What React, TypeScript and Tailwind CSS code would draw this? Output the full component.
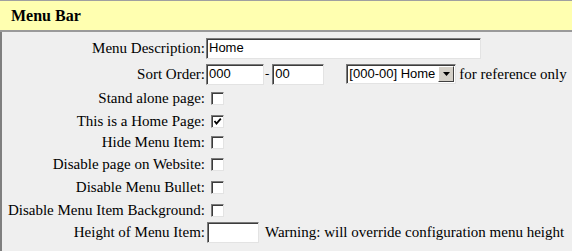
import React from 'react'

const inset =
  'bg-white border border-t-[#7b7b7b] border-l-[#7b7b7b] border-b-[#e3e3e3] border-r-[#e3e3e3] shadow-[inset_1px_1px_0_#3c3c3c]'

function TextBox({ value = '', className = '' }: { value?: string; className?: string }) {
  return (
    <div className={`${inset} h-[21px] flex items-center pl-[2px] [font-family:'Liberation_Sans',Arial,sans-serif] text-[13px] text-black ${className}`}>
      {value}
    </div>
  )
}

function Check({ checked = false }: { checked?: boolean }) {
  return (
    <div className={`${inset} w-[13px] h-[13px] ml-[5px] relative`}>
      {checked && (
        <svg viewBox="0 0 13 13" className="absolute inset-0 w-[13px] h-[13px] -translate-x-[1px] -translate-y-[1px]">
          <path d="M3.5 6 L5.5 8.5 L9.8 3.6" fill="none" stroke="#000" strokeWidth="1.8" />
        </svg>
      )}
    </div>
  )
}

function Row({ label, h, children }: { label: string; h: string; children: React.ReactNode }) {
  return (
    <div className={`flex items-center ${h}`}>
      <div className="w-[204px] text-right pr-[1px] whitespace-nowrap">{label}</div>
      <div className="flex items-center">{children}</div>
    </div>
  )
}

export default function App() {
  return (
    <div className="w-[572px] h-[251px] bg-[#efefef] [font-family:'Liberation_Serif','Times_New_Roman',serif] text-[15px] text-black overflow-hidden">
      {/* Section header */}
      <div className="h-[32px] bg-[#ffffb0] border-t border-t-[#a0a0a0] border-b-2 border-b-[#9a9a9a] flex items-center pl-[11px]">
        <h1 className="text-[16px] font-bold leading-none pt-[1px]">Menu Bar</h1>
      </div>

      <div className="border-l-2 border-l-[#7f7f7f] h-[219px] pt-[3px]">
        <Row label="Menu Description:" h="h-[26px]">
          <TextBox value="Home" className="w-[275px]" />
        </Row>

        <Row label="Sort Order:" h="h-[26px]">
          <TextBox value="000" className="w-[58px]" />
          <span className="text-[13px] leading-none self-end mb-[5px] mx-[1px]">-</span>
          <TextBox value="00" className="w-[52px] ml-[2px]" />
          <div className={`${inset} ml-[22px] w-[110px] h-[20px] flex items-center [font-family:'Liberation_Sans',Arial,sans-serif] text-[13px]`}>
            <span className="flex-1 pl-[2px] whitespace-nowrap">[000-00] Home</span>
            <div className="w-[16px] h-[16px] mr-[1px] bg-[#d4d0c8] border border-t-[#fff] border-l-[#fff] border-b-[#404040] border-r-[#404040] flex items-center justify-center">
              <svg width="7" height="4" viewBox="0 0 7 4">
                <path d="M0 0 H7 L3.5 4 Z" fill="#000" />
              </svg>
            </div>
          </div>
          <span className="ml-[3px] whitespace-nowrap">for reference only</span>
        </Row>

        <Row label="Stand alone page:" h="h-[23px]">
          <Check />
        </Row>
        <Row label="This is a Home Page:" h="h-[22px]">
          <Check checked />
        </Row>
        <Row label="Hide Menu Item:" h="h-[21px]">
          <Check />
        </Row>
        <Row label="Disable page on Website:" h="h-[22px]">
          <Check />
        </Row>
        <Row label="Disable Menu Bullet:" h="h-[24px]">
          <Check />
        </Row>
        <Row label="Disable Menu Item Background:" h="h-[22px]">
          <Check />
        </Row>
        <Row label="Height of Menu Item:" h="h-[23px]">
          <TextBox className="w-[52px] ml-[1px]" />
          <span className="ml-[6px] whitespace-nowrap">Warning: will override configuration menu height</span>
        </Row>
      </div>
    </div>
  )
}
